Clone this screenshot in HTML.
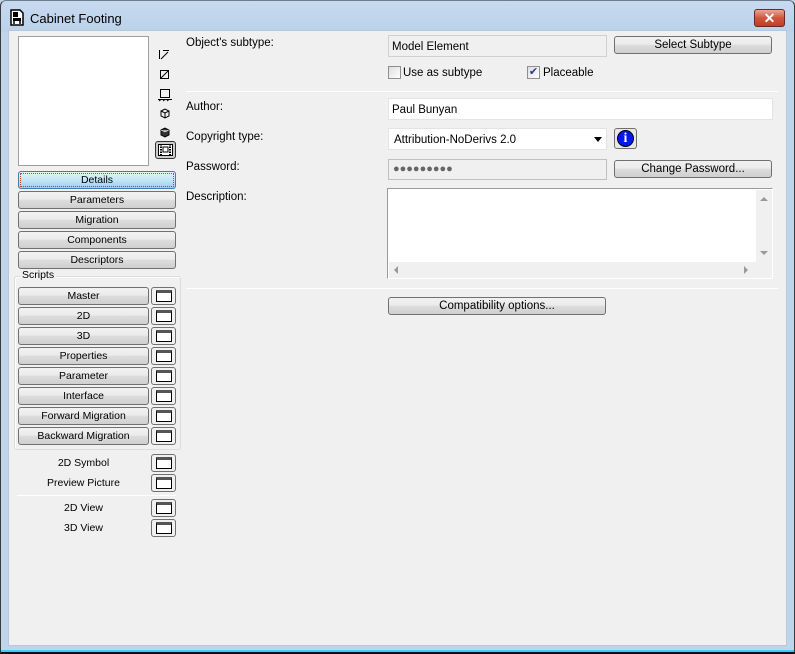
<!DOCTYPE html>
<html><head><meta charset="utf-8"><style>
*{box-sizing:border-box;margin:0;padding:0}
body{width:795px;height:654px;overflow:hidden;font-family:"Liberation Sans",Tahoma,sans-serif;font-size:11px;color:#000;background:#bfd5ea;position:relative}
.a{position:absolute}
#frame{left:0;top:0;width:795px;height:654px;border:1px solid #3a3a3a;border-top-color:#6b7c8c;border-radius:6px 6px 0 0;background:linear-gradient(#c6daf0 0,#bcd2ea 30px,#bfd5ea 31px);border-bottom:2px solid #111;box-shadow:inset 0 -2px 0 #35d3f0}
#content{left:8px;top:30px;width:779px;height:616px;background:#f0f0f0;border:1px solid #b5c8dc}
.btn{position:absolute;height:18px;border:1px solid #707070;border-radius:3px;background:linear-gradient(#f2f2f2 0,#ebebeb 45%,#dddddd 50%,#cfcfcf 100%);text-align:center;font-size:10.5px;line-height:17px}
.btn.r{font-size:11.5px;line-height:17px}
.ib{position:absolute;width:25px;height:18px;border:1px solid #707070;border-radius:3px;background:#f0f0f0}
.ib i{position:absolute;left:4px;top:2px;width:16px;height:12px;border:1.5px solid #000;border-top:3px solid #555;background:#fff}
.lbl{position:absolute;font-size:11.5px}
.inp{position:absolute;border:1px solid #abadb3;background:#fff;padding:3px 0 0 3px;font-size:11.5px}
.sep{position:absolute;height:1px;background:#a0a0a0;border-bottom:1px solid #fff}
.sm{position:absolute;text-align:center;font-size:10.5px}
</style></head><body>
<div id="frame" class="a"></div>
<svg class="a" style="left:10px;top:9px" width="14" height="17" viewBox="0 0 14 17"><path d="M1 1h9l3 3v12H1z" fill="#fff" stroke="#000" stroke-width="1.5"/><rect x="3" y="3" width="5" height="5" fill="#000"/><rect x="3" y="9" width="8" height="3" fill="#000"/><path d="M4 12v3M10 12v3" stroke="#000" stroke-width="1.5"/></svg>
<div class="a" style="left:30px;top:11px;font-size:13px">Cabinet Footing</div>
<div class="a" style="left:754px;top:9px;width:31px;height:18px;border:1px solid #6b2a20;border-radius:3px;background:linear-gradient(#e8a597,#d0553f 50%,#c23d26);color:#fff;font-weight:bold;text-align:center;font-size:14px;line-height:16px">✕</div>
<div id="content" class="a"></div>

<div class="a" style="left:18px;top:36px;width:131px;height:130px;background:#fff;border:1px solid #a0a0a0"></div>
<svg class="a" style="left:157px;top:48px" width="16" height="110" viewBox="0 0 16 110">
<g fill="none" stroke="#000" stroke-width="1">
<path d="M2.5 2v9M4 11L11 4M6 2.5h6"/>
<rect x="3.5" y="22.5" width="8" height="8"/><path d="M4 30l7-7"/>
<rect x="3.5" y="41.5" width="9" height="8"/><path d="M1 51.5h14M2 53l2-1.5M6 53l2-1.5M10 53l2-1.5"/>
<path d="M4 63l4-2 4 2v5l-4 2-4-2zM4 63l4 2 4-2M8 65v5"/>
</g>
<path d="M4 82l4-2 4 2v5l-4 2-4-2z" fill="#333" stroke="#000"/>
<path d="M4 82l4 2 4-2" fill="#aaa" stroke="#fff" stroke-width=".5"/>
</svg>
<div class="a" style="left:155px;top:141px;width:21px;height:18px;border:1px solid #333;border-radius:3px;background:#ccc"></div>
<svg class="a" style="left:158px;top:144px" width="15" height="12" viewBox="0 0 15 12"><rect x=".5" y=".5" width="14" height="11" fill="#fff" stroke="#000"/><path d="M3 0v12M12 0v12" stroke="#000" stroke-width="2" stroke-dasharray="1.5 1"/><rect x="5" y="3" width="5" height="5" fill="none" stroke="#000"/></svg>

<div class="btn" style="left:18px;top:171px;width:158px;border-color:#3c7fb1;background:linear-gradient(#e5f4fc,#c4e5f6 50%,#98d1ef);"><span style="display:block;margin:1px;border:1px dotted #c0442a;line-height:13px;height:14px">Details</span></div>
<div class="btn" style="left:18px;top:191px;width:158px">Parameters</div>
<div class="btn" style="left:18px;top:211px;width:158px">Migration</div>
<div class="btn" style="left:18px;top:231px;width:158px">Components</div>
<div class="btn" style="left:18px;top:251px;width:158px">Descriptors</div>

<div class="a" style="left:14px;top:276px;width:167px;height:174px;border:1px solid #dcdcdc;border-radius:3px;box-shadow:inset 1px 1px 0 #fff"></div>
<div class="a" style="left:20px;top:269px;padding:0 2px;background:#f0f0f0;font-size:10.5px">Scripts</div>

<div class="btn" style="left:18px;top:287px;width:131px">Master</div><div class="ib" style="left:151px;top:287px"><i></i></div>
<div class="btn" style="left:18px;top:307px;width:131px">2D</div><div class="ib" style="left:151px;top:307px"><i></i></div>
<div class="btn" style="left:18px;top:327px;width:131px">3D</div><div class="ib" style="left:151px;top:327px"><i></i></div>
<div class="btn" style="left:18px;top:347px;width:131px">Properties</div><div class="ib" style="left:151px;top:347px"><i></i></div>
<div class="btn" style="left:18px;top:367px;width:131px">Parameter</div><div class="ib" style="left:151px;top:367px"><i></i></div>
<div class="btn" style="left:18px;top:387px;width:131px">Interface</div><div class="ib" style="left:151px;top:387px"><i></i></div>
<div class="btn" style="left:18px;top:407px;width:131px">Forward Migration</div><div class="ib" style="left:151px;top:407px"><i></i></div>
<div class="btn" style="left:18px;top:427px;width:131px">Backward Migration</div><div class="ib" style="left:151px;top:427px"><i></i></div>

<div class="sm" style="left:18px;top:457px;width:131px">2D Symbol</div><div class="ib" style="left:151px;top:454px"><i></i></div>
<div class="sm" style="left:18px;top:477px;width:131px">Preview Picture</div><div class="ib" style="left:151px;top:474px"><i></i></div>
<div class="sep" style="left:17px;top:495px;width:159px"></div>
<div class="sm" style="left:18px;top:502px;width:131px">2D View</div><div class="ib" style="left:151px;top:499px"><i></i></div>
<div class="sm" style="left:18px;top:522px;width:131px">3D View</div><div class="ib" style="left:151px;top:519px"><i></i></div>

<div class="lbl" style="left:186px;top:37px">Object's subtype:</div>
<div class="inp" style="left:388px;top:35px;width:219px;height:22px;background:#f0f0f0;border-color:#d0d0d0;padding-top:5px">Model Element</div>
<div class="btn r" style="left:614px;top:36px;width:158px">Select Subtype</div>
<div class="a" style="left:388px;top:66px;width:13px;height:13px;border:1px solid #8f8f8f;background:linear-gradient(135deg,#ddd,#fff)"></div>
<div class="lbl" style="left:403px;top:67px">Use as subtype</div>
<div class="a" style="left:527px;top:66px;width:13px;height:13px;border:1px solid #8f8f8f;background:linear-gradient(135deg,#ddd,#fff);color:#2a3c8f;font-size:11px;line-height:11px;text-align:center">✔</div>
<div class="lbl" style="left:543px;top:67px">Placeable</div>
<div class="sep" style="left:186px;top:91px;width:592px"></div>

<div class="lbl" style="left:186px;top:101px">Author:</div>
<div class="inp" style="left:388px;top:98px;width:385px;height:22px;border-color:#e3e3e3;padding-top:5px">Paul Bunyan</div>
<div class="lbl" style="left:186px;top:131px">Copyright type:</div>
<div class="inp" style="left:388px;top:128px;width:219px;height:22px;border-color:#e3e3e3;padding:5px 0 0 5px">Attribution-NoDerivs 2.0<span style="position:absolute;right:4px;top:8px;border:4px solid transparent;border-top:5px solid #000;border-bottom:0"></span></div>
<div class="a" style="left:614px;top:128px;width:23px;height:21px;border:1px solid #707070;border-radius:3px;background:#e8e8e8"></div>
<div class="a" style="left:617px;top:130px;width:17px;height:17px;border-radius:50%;background:#0018f0;border:1px solid #000;color:#fff;font-weight:bold;font-family:'Liberation Serif',serif;font-size:14px;text-align:center;line-height:16px">i</div>
<div class="lbl" style="left:186px;top:161px">Password:</div>
<div class="inp" style="left:388px;top:159px;width:219px;height:21px;background:#f0f0f0;border-color:#c0c0c0;padding:3px 0 0 4px;color:#666;font-size:11px">●●●●●●●●●</div>
<div class="btn r" style="left:614px;top:160px;width:158px">Change Password...</div>
<div class="lbl" style="left:186px;top:191px">Description:</div>
<div class="a" style="left:387px;top:188px;width:386px;height:91px;border:1px solid #9a9a9a;border-right-color:#fff;border-bottom-color:#fff;background:#fff"></div>
<div class="a" style="left:756px;top:190px;width:16px;height:72px;background:#f0f0f0"></div>
<div class="a" style="left:389px;top:262px;width:383px;height:16px;background:#f0f0f0"></div>
<div class="a" style="left:760px;top:197px;border:4px solid transparent;border-bottom:4px solid #999;border-top:0"></div>
<div class="a" style="left:760px;top:251px;border:4px solid transparent;border-top:4px solid #999;border-bottom:0"></div>
<div class="a" style="left:394px;top:266px;border:4px solid transparent;border-right:4px solid #999;border-left:0"></div>
<div class="a" style="left:744px;top:266px;border:4px solid transparent;border-left:4px solid #999;border-right:0"></div>
<div class="sep" style="left:186px;top:288px;width:592px"></div>
<div class="btn r" style="left:388px;top:297px;width:218px">Compatibility options...</div>
</body></html>
